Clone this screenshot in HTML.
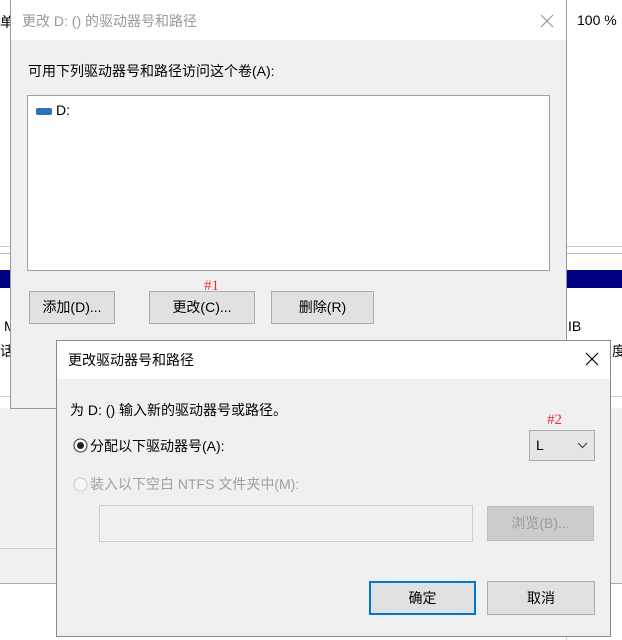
<!DOCTYPE html>
<html><head><meta charset="utf-8"><style>
*{margin:0;padding:0;box-sizing:border-box}
body{width:622px;height:640px;background:#fff;position:relative;overflow:hidden;font-family:"Liberation Sans","Noto Sans CJK SC",sans-serif;font-size:14px;color:#000}
.a{position:absolute}
.btn{position:absolute;background:#e1e1e1;border:1px solid #adadad;text-align:center;font-size:14px}
.red{color:#e8323c;font-family:"Liberation Serif","Noto Serif CJK SC",serif;font-size:15px}
</style></head><body>
<!-- background -->
<div class="a" style="left:0;top:246px;width:622px;height:1px;background:#ccc"></div>
<div class="a" style="left:0;top:253px;width:622px;height:1px;background:#bbb"></div>
<div class="a" style="left:0;top:270px;width:622px;height:18px;background:#000080"></div>
<div class="a" style="left:0;top:408px;width:622px;height:175px;background:#f0f0f0"></div>
<div class="a" style="left:0;top:396px;width:622px;height:1px;background:#ccc"></div>
<div class="a" style="left:0;top:548px;width:60px;height:1px;background:#ccc"></div>
<div class="a" style="left:0;top:583px;width:622px;height:1px;background:#aaa"></div>
<div class="a" style="left:566px;top:0;width:1px;height:640px;background:#ccc"></div>
<div class="a" style="left:577px;top:12px;font-size:14px">100 %</div>
<div class="a" style="left:0;top:12px;font-size:14px;width:10px;overflow:hidden">单</div>
<div class="a" style="left:568px;top:318px;font-size:14px">IB</div>
<div class="a" style="left:612px;top:341px;font-size:14px">度</div>
<div class="a" style="left:4px;top:318px;font-size:14px;width:8px;overflow:hidden">M</div>
<div class="a" style="left:0;top:341px;font-size:14px;width:10px;overflow:hidden">话</div>
<!-- dialog 1 -->
<div class="a" style="left:10px;top:0;width:557px;height:409px;background:#f0f0f0;border:1px solid #999;border-top:none">
  <div class="a" style="left:0;top:0;width:555px;height:40px;background:#fff"></div>
  <div class="a" style="left:11px;top:11px;color:#999;font-size:14px">更改 D: () 的驱动器号和路径</div>
  <svg class="a" style="left:529px;top:14px" width="14" height="14"><path d="M1 1L13 13M13 1L1 13" stroke="#999" stroke-width="1.2"/></svg>
  <div class="a" style="left:17px;top:61px">可用下列驱动器号和路径访问这个卷(A):</div>
  <div class="a" style="left:16px;top:95px;width:523px;height:176px;background:#fff;border:1px solid #a0a0a0">
    <div class="a" style="left:8px;top:12px;width:16px;height:7px;background:#2a73b8;border-radius:2px"></div>
    <div class="a" style="left:28px;top:6px">D:</div>
  </div>
  <div class="btn" style="left:18px;top:291px;width:86px;height:33px;line-height:31px">添加(D)...</div>
  <div class="btn" style="left:138px;top:291px;width:106px;height:33px;line-height:31px">更改(C)...</div>
  <div class="btn" style="left:260px;top:291px;width:103px;height:33px;line-height:31px">删除(R)</div>
  <div class="a red" style="left:193px;top:278px">#1</div>
</div>
<!-- dialog 2 -->
<div class="a" style="left:56px;top:340px;width:555px;height:297px;background:#f0f0f0;border:1px solid #888">
  <div class="a" style="left:0;top:0;width:553px;height:38px;background:#fff"></div>
  <div class="a" style="left:11px;top:9px">更改驱动器号和路径</div>
  <svg class="a" style="left:528px;top:11px" width="14" height="14"><path d="M1 1L13 13M13 1L1 13" stroke="#000" stroke-width="1.2"/></svg>
  <div class="a" style="left:13px;top:59px">为 D: () 输入新的驱动器号或路径。</div>
  <svg class="a" style="left:16px;top:97px" width="15" height="15"><circle cx="7.5" cy="7.5" r="6.5" fill="#fff" stroke="#333"/><circle cx="7.5" cy="7.5" r="3.5" fill="#222"/></svg>
  <div class="a" style="left:33px;top:95px">分配以下驱动器号(A):</div>
  <div class="a red" style="left:490px;top:71px">#2</div>
  <div class="a" style="left:472px;top:89px;width:66px;height:31px;background:#e5e5e5;border:1px solid #adadad">
    <div class="a" style="left:6px;top:6px">L</div>
    <svg class="a" style="left:47px;top:11px" width="11" height="7"><path d="M1 1L5.5 5.5L10 1" stroke="#444" fill="none" stroke-width="1.2"/></svg>
  </div>
  <svg class="a" style="left:16px;top:136px" width="15" height="15"><circle cx="7.5" cy="7.5" r="6.5" fill="#f7f7f7" stroke="#ccc"/></svg>
  <div class="a" style="left:33px;top:133px;color:#a0a0a0">装入以下空白 NTFS 文件夹中(M):</div>
  <div class="a" style="left:42px;top:164px;width:374px;height:37px;background:#f0f0f0;border:1px solid #ccc"></div>
  <div class="a" style="left:430px;top:165px;width:107px;height:35px;background:#ccc;border:1px solid #bfbfbf;color:#999;text-align:center;line-height:33px">浏览(B)...</div>
  <div class="btn" style="left:312px;top:240px;width:107px;height:34px;line-height:30px;border:2px solid #0078d7">确定</div>
  <div class="btn" style="left:430px;top:240px;width:108px;height:34px;line-height:32px">取消</div>
</div>
</body></html>
